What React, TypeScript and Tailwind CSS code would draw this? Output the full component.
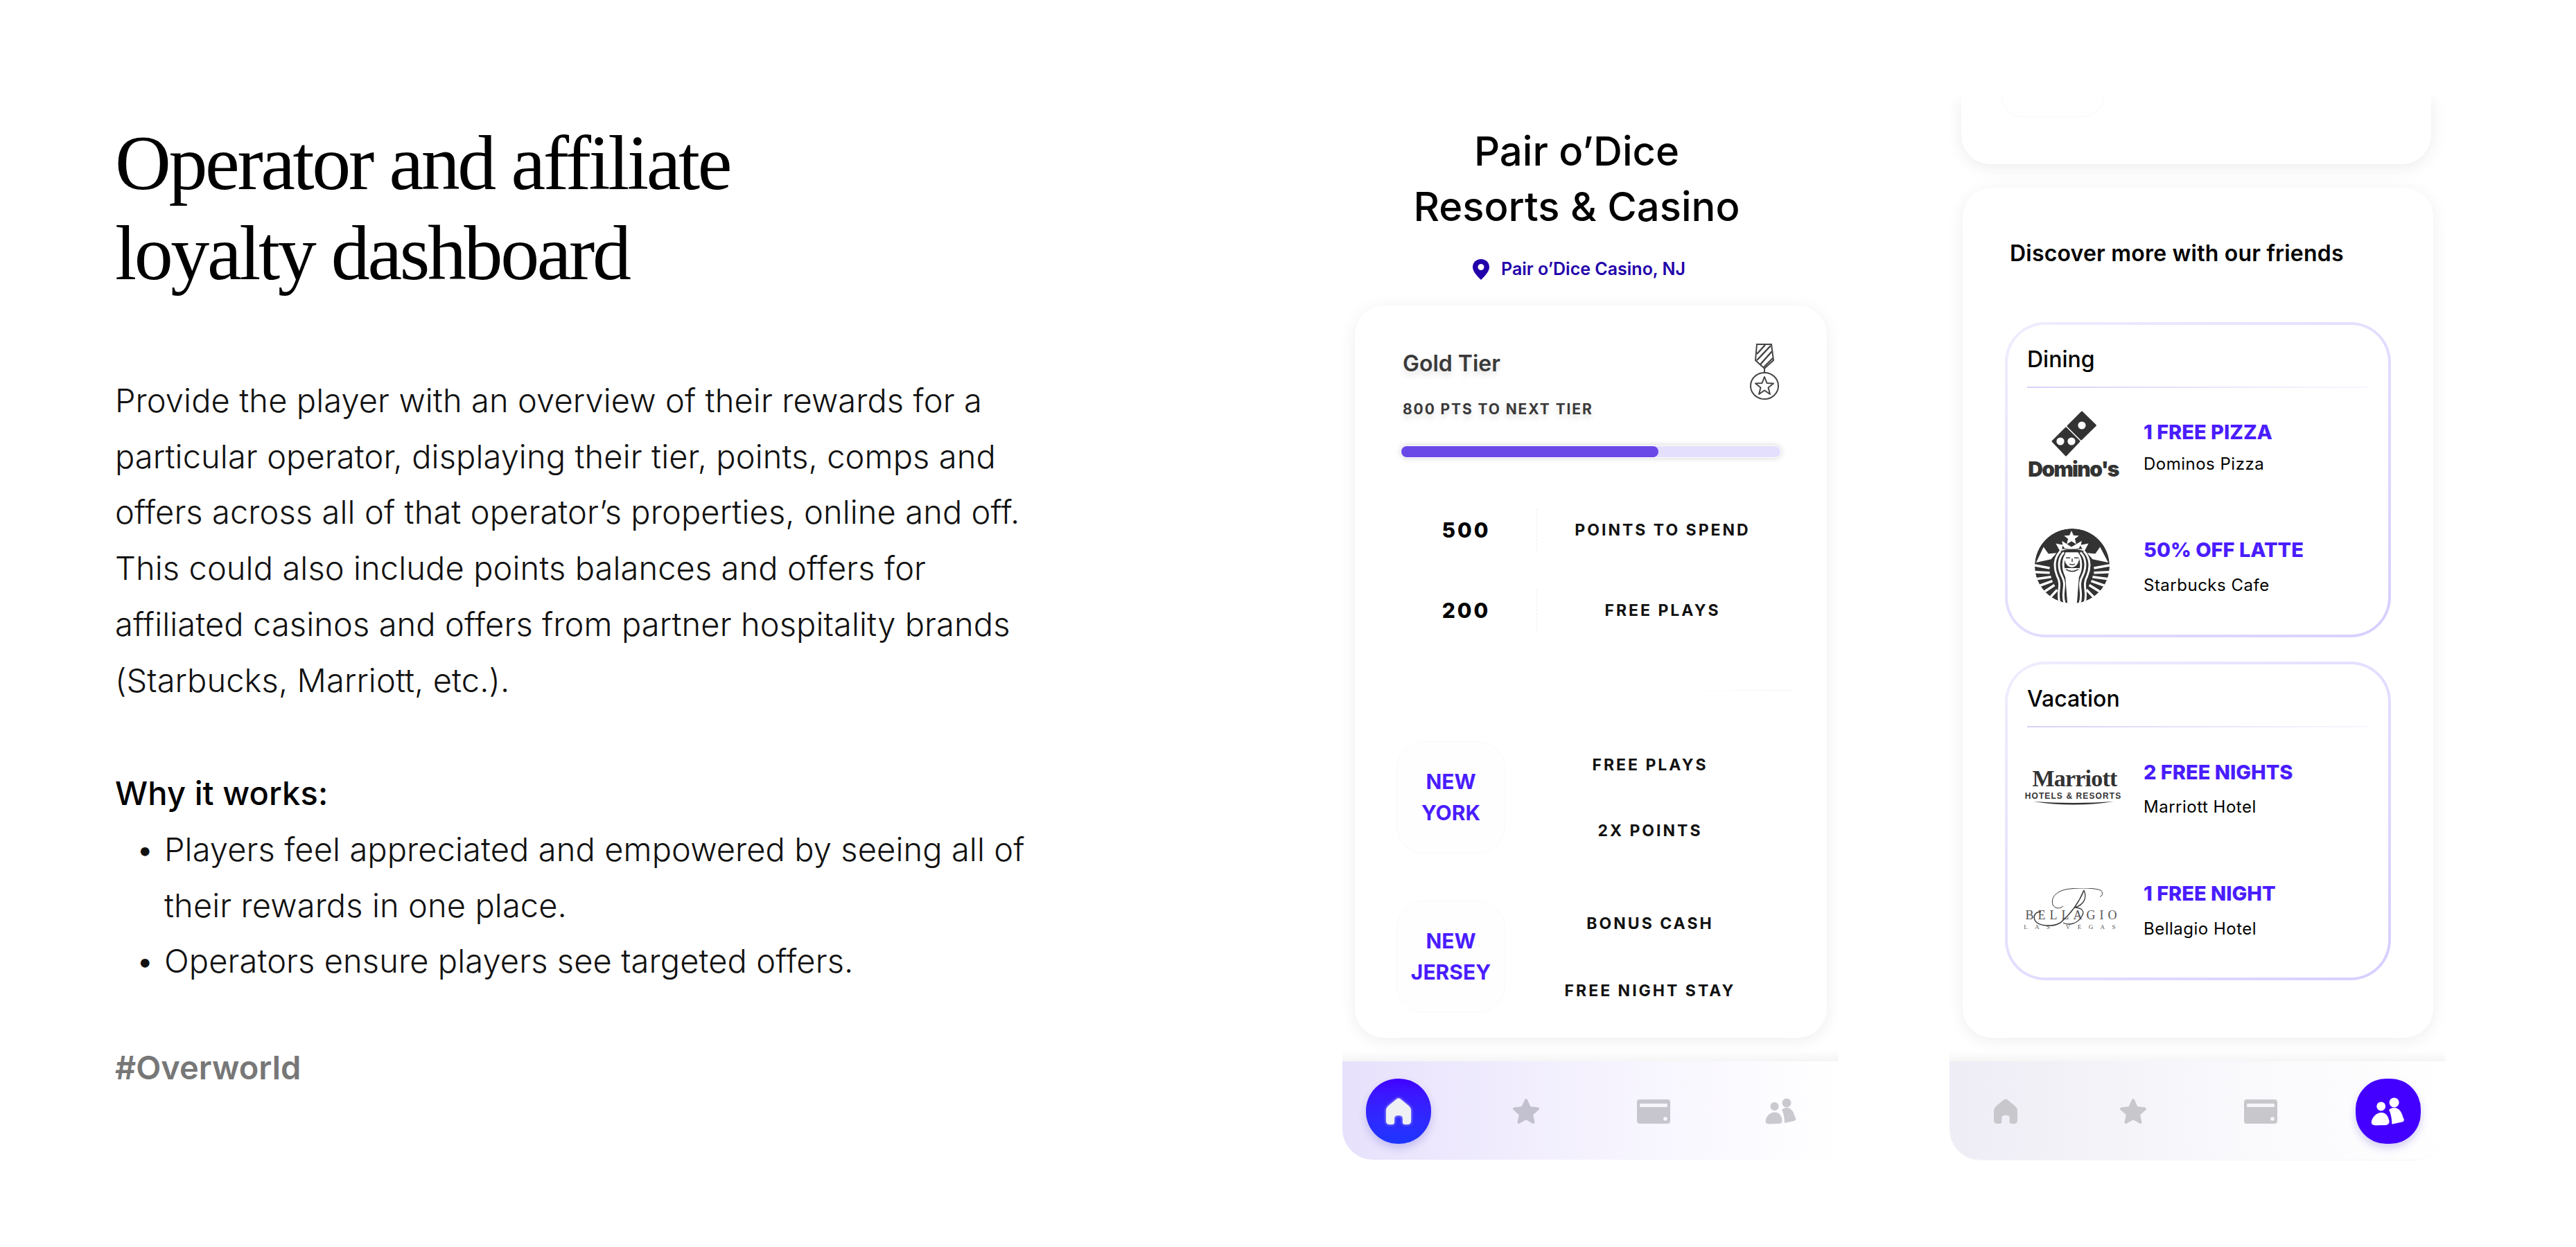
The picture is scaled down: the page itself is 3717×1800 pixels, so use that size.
import React from 'react';

const Star5: React.FC<{ className?: string }> = ({ className }) => (
  <svg viewBox="0 0 40 38" className={className} fill="currentColor" stroke="currentColor" strokeWidth="4" strokeLinejoin="round">
    <path d="M20 3 L25 14 L37 15.5 L28 23.5 L30.5 35 L20 29 L9.5 35 L12 23.5 L3 15.5 L15 14 Z" />
  </svg>
);

const HomeIcon: React.FC<{ className?: string }> = ({ className }) => (
  <svg viewBox="0 0 36 38" className={className} fill="currentColor">
    <path d="M15.5 1.2 L3 11.5 Q0 14.5 0 18 V33 Q0 38 5 38 H9 Q12 38 12 35 V29 Q12 25 18 25 Q24 25 24 29 V35 Q24 38 27 38 H31 Q36 38 36 33 V18 Q36 14.5 33 11.5 L20.5 1.2 Q18 -0.5 15.5 1.2 Z" />
  </svg>
);

const WalletIcon: React.FC<{ className?: string }> = ({ className }) => (
  <svg viewBox="0 0 48 35" className={className}>
    <rect width="48" height="35" rx="4" fill="currentColor" />
    <rect x="4" y="6" width="40" height="5" rx="1.5" fill="#f6f5fa" />
    <circle cx="41" cy="28" r="2.8" fill="#f6f5fa" />
  </svg>
);

const PeopleIcon: React.FC<{ className?: string; cut?: string }> = ({ className, cut = '#fbfafe' }) => (
  <svg viewBox="0 0 46 38" className={className} fill="currentColor">
    <circle cx="31" cy="7" r="6.5" />
    <path d="M31 14 C38 14 41 20 43 27 Q46 31 42 33 L28 36 C28 28 26 20 24 17 C26 15 28 14 31 14 Z" />
    <circle cx="13.5" cy="12" r="6.5" stroke={cut} strokeWidth="1" />
    <path d="M14 20 C20 20 24 25 25 32 Q25 37 20 37.5 L6 38 Q0 38 0 33 C1 26 7 20 14 20 Z" stroke={cut} strokeWidth="1" />
  </svg>
);

const MedalIcon = () => (
  <svg viewBox="0 0 42 81" className="h-[81px] w-[42px] text-[#454545]" fill="none" stroke="currentColor" strokeWidth="2">
    <path d="M10 1 H31 L34 24 L21 36 L8 24 Z" />
    <path d="M10 15 L22 2 M10 24 L30 3 M15 30 L32 11 M20 34 L33 21" strokeWidth="2.4" />
    <path d="M21 36 V42" />
    <ellipse cx="21" cy="61" rx="20" ry="19" />
    <path d="M21 48 L24.5 57 L34 57.5 L26.5 63.5 L29 73 L21 67.5 L13 73 L15.5 63.5 L8 57.5 L17.5 57 Z" strokeLinejoin="round" />
  </svg>
);

const PinIcon = () => (
  <svg viewBox="0 0 24 30" className="h-[30px] w-[24px] text-[#2200aa]" fill="currentColor">
    <path fillRule="evenodd" d="M12 0 C5 0 0 5 0 11.5 C0 18 7 25 12 30 C17 25 24 18 24 11.5 C24 5 19 0 12 0 Z M12 7 A4.5 4.5 0 1 1 12 16 A4.5 4.5 0 1 1 12 7 Z" />
  </svg>
);

const DominosLogo = () => (
  <div className="flex h-[103px] w-[133px] flex-col items-center">
    <svg viewBox="0 0 66 66" className="ml-[2px] h-[66px] w-[66px]">
      <g fill="#333" stroke="#333" strokeWidth="2" strokeLinejoin="round">
        <polygon points="44,1.5 64,21 43,41.5 23.5,22" />
        <polygon points="21,24.5 40.5,44 21,64.5 1.5,44" />
      </g>
      <circle cx="44" cy="21" r="5.6" fill="#fff" />
      <circle cx="13" cy="44" r="5.6" fill="#fff" />
      <circle cx="29" cy="44" r="5.6" fill="#fff" />
    </svg>
    <span className="mt-[1px] text-[30px] leading-[34px] font-black tracking-[-1.6px] text-[#333]">Domino's</span>
  </div>
);

// rough siren, enough to read as the logo at this size
const StarbucksLogo = () => (
  <div className="flex h-[108px] w-[133px] justify-center">
    <svg viewBox="0 0 110 110" className="ml-[-3px] h-[108px] w-[110px]">
      <defs>
        <clipPath id="sb-disc">
          <circle cx="55" cy="55" r="55" />
        </clipPath>
      </defs>
      <g clipPath="url(#sb-disc)">
        <circle cx="55" cy="55" r="55" fill="#333" />
        <path d="M54 3 L57 10 L65 10.5 L59 15 L61 23 L54 18.5 L47 23 L49 15 L43 10.5 L51 10 Z" fill="#fff" />
        <path d="M31 22 L41 24 L40 18 L54 27 L69 18 L68 24 L79 22 L73 33 Q55 27 37 33 Z" fill="#fff" />
        <path d="M41 25 L44 29 L54 30 L65 29 L67 25 L70 30 L40 30 Z" fill="#333" />
        <path d="M13 27 L20 37 L32 36 L24 45 L2 50 Z" fill="#fff" />
        <path d="M96 27 L89 37 L77 36 L85 45 L108 50 Z" fill="#fff" />
        <g stroke="#fff" strokeWidth="3.6" fill="none">
          <path d="M0 54 L22 58 M0 64 L22 65 M2 74 L24 71 M7 84 L26 77 M14 93 L29 83 M22 102 L33 90" />
          <path d="M110 54 L87 58 M110 64 L87 65 M108 74 L85 71 M103 84 L83 77 M96 93 L80 83 M88 102 L76 90" />
        </g>
        <path d="M44 58 H66 L62 110 H48 Z" fill="#fff" />
        <g stroke="#fff" strokeWidth="3" fill="none">
          <path d="M44 110 C38 94 48 84 40 70 C33 56 35 42 43 35" />
          <path d="M37 110 C31 94 41 84 33 70 C27 56 29 42 38 33" />
          <path d="M51 110 C45 94 55 84 46 70 C40 58 41 44 47 37" />
          <path d="M66 110 C72 94 62 84 70 70 C77 56 75 42 67 35" />
          <path d="M73 110 C79 94 69 84 77 70 C83 56 81 42 72 33" />
          <path d="M59 110 C65 94 55 84 64 70 C70 58 69 44 63 37" />
        </g>
        <path d="M45 35 H64 L65 46 Q63 56 54.5 57 Q46 56 44 46 Z" fill="#fff" />
        <path d="M46 43 H52 M58 43 H64 M51 52 Q55 54 59 52 M55 44 V49" stroke="#333" strokeWidth="1.5" fill="none" />
        <path d="M46 60 Q55 66 64 60" stroke="#333" strokeWidth="1.5" fill="none" />
      </g>
    </svg>
  </div>
);

const MarriottLogo = () => (
  <div className="flex w-[133px] flex-col items-center pt-[12px] text-[#333]">
    <span className="ml-[4px] font-['Liberation_Serif',serif] text-[34px] leading-[30px] font-bold tracking-[-0.8px]">Marriott</span>
    <span className="mt-[3px] font-['Liberation_Sans',sans-serif] text-[12px] leading-[14px] font-bold tracking-[1.1px] whitespace-nowrap">HOTELS &amp; RESORTS</span>
    <svg viewBox="0 0 116 5" className="mt-[1px] h-[5px] w-[116px]">
      <path d="M0 0 Q58 4 116 0 Q58 9 0 0 Z" fill="#333" />
    </svg>
  </div>
);

const BellagioLogo = () => (
  <div className="relative flex h-[70px] w-[133px] flex-col items-center pt-[10px] text-[#555]">
    <svg viewBox="0 0 133 56" className="absolute top-[10px] left-0 h-[56px] w-[133px]" fill="none" stroke="#3a3a3a" strokeWidth="1">
      <path d="M37 24 C33 10 48 2 62 1 C80 -1 98 0 106 3 C110 6 109 12 105 12" />
      <path d="M37 24 C40 30 48 30 52 26" />
      <path d="M82 3 C76 18 64 36 48 50 C38 56 16 56 11 46 C8 38 14 34 20 34" strokeWidth="1.5" />
      <path d="M82 3 C86 12 84 24 68 28 C80 28 84 34 78 42 C72 52 60 54 52 50" strokeWidth="1.3" />
    </svg>
    <span className="mt-[29px] font-['Liberation_Serif',serif] text-[18px] leading-[20px] tracking-[6px] whitespace-nowrap">BELLAGIO</span>
    <span className="mt-[1px] font-['Liberation_Serif',serif] text-[9px] leading-[12px] tracking-[10.4px] whitespace-nowrap">LAS VEGAS</span>
  </div>
);

const BottomNav: React.FC<{ active: 'home' | 'people' }> = ({ active }) => (
  <div className="mt-[18px]">
    <div className="h-[16px] bg-gradient-to-b from-white to-[#f5f5f6]" />
    {active === 'home' ? (
      <nav className="flex h-[142px] gap-[90px] rounded-bl-[44px] bg-gradient-to-r from-[#e7e1fc] via-[#f5f2fe] to-white pt-[25px] pl-[34px]">
        <span className="flex h-[94px] w-[94px] items-center justify-center rounded-[46px] bg-gradient-to-b from-[#4100ff] to-[#1c35ff] text-[#eef0f3] shadow-[0_6px_12px_rgba(60,40,200,0.22)]">
          <HomeIcon className="h-[38px] w-[36px] drop-shadow-[0_0_2px_rgba(255,255,255,0.7)]" />
        </span>
        <span className="flex h-[94px] w-[94px] items-center justify-center text-[#c3c0cf]"><Star5 className="h-[38px] w-[40px]" /></span>
        <span className="flex h-[94px] w-[94px] items-center justify-center text-[#c7c6cf]"><WalletIcon className="h-[35px] w-[48px]" /></span>
        <span className="flex h-[94px] w-[94px] items-center justify-center text-[#c9c9cf]"><PeopleIcon className="h-[38px] w-[46px]" /></span>
      </nav>
    ) : (
      <nav className="flex h-[142px] gap-[90px] rounded-b-[44px] bg-gradient-to-r from-[#eeecf5] via-[#f8f7fb] to-white pt-[25px] pl-[34px] shadow-[0_1px_1px_rgba(0,0,0,0.04)]">
        <span className="flex h-[94px] w-[94px] items-center justify-center text-[#c8c8cc]"><HomeIcon className="h-[36px] w-[34px]" /></span>
        <span className="flex h-[94px] w-[94px] items-center justify-center text-[#c8c8cc]"><Star5 className="h-[38px] w-[40px]" /></span>
        <span className="flex h-[94px] w-[94px] items-center justify-center text-[#c8c8cc]"><WalletIcon className="h-[35px] w-[48px]" /></span>
        <span className="flex h-[94px] w-[94px] items-center justify-center rounded-[44px] bg-[#4400ff] text-white shadow-[0_6px_12px_rgba(60,40,200,0.22)]">
          <PeopleIcon className="h-[41px] w-[50px]" cut="#4400ff" />
        </span>
      </nav>
    )}
  </div>
);

const StatRow: React.FC<{ value: string; label: string; className?: string }> = ({ value, label, className }) => (
  <div className={`flex h-[62px] items-center ${className ?? ''}`}>
    <span className="ml-[59px] w-[203px] text-center text-[30px] font-extrabold tracking-[3px] text-black">{value}</span>
    <span className="h-full border-l border-dashed border-[#eeeeee]" />
    <span className="w-[362px] text-center text-[23px] font-bold tracking-[3px] text-[#111]">{label}</span>
  </div>
);

const RegionRow: React.FC<{ lines: string[]; offers: string[]; gap: string; className?: string }> = ({ lines, offers, gap, className }) => (
  <div className={`ml-[60px] flex h-[162px] ${className ?? ''}`}>
    <div className="flex w-[157px] flex-col items-center justify-center rounded-[40px] border border-[#fbf8fb] bg-[#fefeff] text-[30px] leading-[45px] font-bold text-[#4a1dff]">
      {lines.map((l) => (
        <span key={l}>{l}</span>
      ))}
    </div>
    <div className={`flex w-[418px] flex-col items-center justify-center text-[23px] leading-[32px] font-bold tracking-[3px] text-[#111] ${gap}`}>
      {offers.map((o) => (
        <span key={o}>{o}</span>
      ))}
    </div>
  </div>
);

const PartnerBox: React.FC<{ title: string; className?: string; children: React.ReactNode }> = ({ title, className, children }) => (
  <div className={`ml-[61px] w-[557px] rounded-[58px] bg-gradient-to-br from-[#f0edff] to-[#d7cfff] p-[4px] ${className ?? ''}`}>
    <div className="h-full rounded-[54px] bg-white px-[28px] pt-[30px]">
      <h3 className="text-[32px] leading-[40px] font-medium text-black">{title}</h3>
      <div className="mt-[19px] h-[2px] bg-gradient-to-r from-[#d8d2fb] to-[#f8f7ff]" />
      {children}
    </div>
  </div>
);

const Offer: React.FC<{ title: string; sub: string; subGap: string; pad: string }> = ({ title, sub, subGap, pad }) => (
  <div className={`ml-[35px] flex flex-col ${pad}`}>
    <span className="text-[29px] leading-[36px] font-extrabold whitespace-nowrap text-[#4a1dff]">{title}</span>
    <span className={`text-[24px] leading-[32px] tracking-[0.5px] whitespace-nowrap text-black ${subGap}`}>{sub}</span>
  </div>
);

const App: React.FC = () => {
  return (
    <div className="flex h-[1800px] w-[3717px] overflow-hidden bg-white font-['Inter',sans-serif]">
      {/* Copy column */}
      <section className="w-[1937px] shrink-0 pt-[170px] pl-[166px] text-black">
        <h1 className="font-['Liberation_Serif',serif] text-[112px] leading-[130px] tracking-[-3.4px]">
          Operator and affiliate
          <br />
          loyalty dashboard
        </h1>
        <p className="mt-[108px] text-[47px] leading-[80.7px] font-light tracking-[0.1px] text-[#111]">
          Provide the player with an overview of their rewards for a
          <br />
          particular operator, displaying their tier, points, comps and
          <br />
          offers across all of that operator’s properties, online and off.
          <br />
          This could also include points balances and offers for
          <br />
          affiliated casinos and offers from partner hospitality brands
          <br />
          (Starbucks, Marriott, etc.).
        </p>
        <p className="mt-[83px] text-[47px] leading-[80.7px] font-medium tracking-[0.1px]">Why it works:</p>
        <ul className="text-[47px] leading-[80.7px] font-light tracking-[0.1px] text-[#111]">
          <li className="relative pl-[71px]">
            <span className="absolute left-[30px]">•</span>
            Players feel appreciated and empowered by seeing all of
            <br />
            their rewards in one place.
          </li>
          <li className="relative pl-[71px]">
            <span className="absolute left-[30px]">•</span>
            Operators ensure players see targeted offers.
          </li>
        </ul>
        <p className="mt-[73px] text-[47px] leading-[80px] font-semibold text-[#777777]">#Overworld</p>
      </section>

      {/* Home screen */}
      <section className="w-[716px] shrink-0 pt-[178px]">
        <h2 className="pr-[40px] text-center text-[58px] leading-[80px] font-medium text-black">
          Pair o’Dice
          <br />
          Resorts &amp; Casino
        </h2>
        <div className="mt-[36px] flex h-[30px] items-center pl-[188px] text-[#2200aa]">
          <PinIcon />
          <span className="ml-[17px] text-[25px] font-semibold">Pair o’Dice Casino, NJ</span>
        </div>
        <div className="mt-[37px] ml-[18px] h-[1057px] w-[681px] rounded-[42px] bg-white shadow-[0_4px_24px_rgba(0,0,0,0.07)]">
          <div className="flex justify-between pt-[55px] pr-[69px] pl-[69px]">
            <div className="pt-[9px] text-[#3a3a3a] [text-shadow:0_6px_8px_rgba(0,0,0,0.12)]">
              <div className="text-[32px] leading-[40px] font-semibold">Gold Tier</div>
              <div className="mt-[31px] text-[21px] leading-[30px] font-bold tracking-[1.9px]">800 PTS TO NEXT TIER</div>
            </div>
            <MedalIcon />
          </div>
          <div className="mt-[37px] ml-[66px] h-[18px] w-[549px] rounded-full border border-white bg-[#e4dffc] shadow-[0_0_8px_rgba(0,0,0,0.18)]">
            <div className="h-full w-[371px] rounded-full bg-[#6a48e8]" />
          </div>
          <StatRow value="500" label="POINTS TO SPEND" className="mt-[73px]" />
          <StatRow value="200" label="FREE PLAYS" className="mt-[54px]" />
          <div className="mt-[84px] ml-[460px] h-[1px] w-[172px] bg-gradient-to-r from-white to-[#f3f3f5]" />
          <RegionRow lines={['NEW', 'YORK']} offers={['FREE PLAYS', '2X POINTS']} gap="gap-[63px]" className="mt-[73px]" />
          <RegionRow lines={['NEW', 'JERSEY']} offers={['BONUS CASH', 'FREE NIGHT STAY']} gap="gap-[65px]" className="mt-[68px]" />
        </div>
        <BottomNav active="home" />
      </section>

      {/* Friends screen */}
      <section className="ml-[160px] w-[715px] shrink-0 pt-[140px]">
        <div className="h-[131px] overflow-hidden">
          <div className="ml-[17px] h-[97px] w-[678px] rounded-b-[42px] bg-white pl-[58px] shadow-[0_4px_24px_rgba(0,0,0,0.08)]">
            <div className="h-[29px] w-[147px] rounded-b-[30px] border-x border-b border-[#fbf6fa]" />
          </div>
        </div>
        <div className="ml-[19px] h-[1227px] w-[679px] rounded-[42px] bg-white pt-[75px] shadow-[0_4px_24px_rgba(0,0,0,0.07)]">
          <h3 className="pl-[68px] text-[32px] leading-[40px] font-semibold tracking-[0.2px] text-black">Discover more with our friends</h3>
          <PartnerBox title="Dining" className="mt-[79px] h-[455px]">
            <div className="mt-[33px] flex">
              <DominosLogo />
              <Offer title="1 FREE PIZZA" sub="Dominos Pizza" subGap="mt-[12px]" pad="pt-[13px]" />
            </div>
            <div className="mt-[67px] flex">
              <StarbucksLogo />
              <Offer title="50% OFF LATTE" sub="Starbucks Cafe" subGap="mt-[17px]" pad="pt-[13px]" />
            </div>
          </PartnerBox>
          <PartnerBox title="Vacation" className="mt-[35px] h-[460px]">
            <div className="mt-[47px] flex">
              <MarriottLogo />
              <Offer title="2 FREE NIGHTS" sub="Marriott Hotel" subGap="mt-[16px]" pad="" />
            </div>
            <div className="mt-[91px] flex">
              <BellagioLogo />
              <Offer title="1 FREE NIGHT" sub="Bellagio Hotel" subGap="mt-[17px]" pad="" />
            </div>
          </PartnerBox>
        </div>
        <BottomNav active="people" />
      </section>
    </div>
  );
};

export default App;
